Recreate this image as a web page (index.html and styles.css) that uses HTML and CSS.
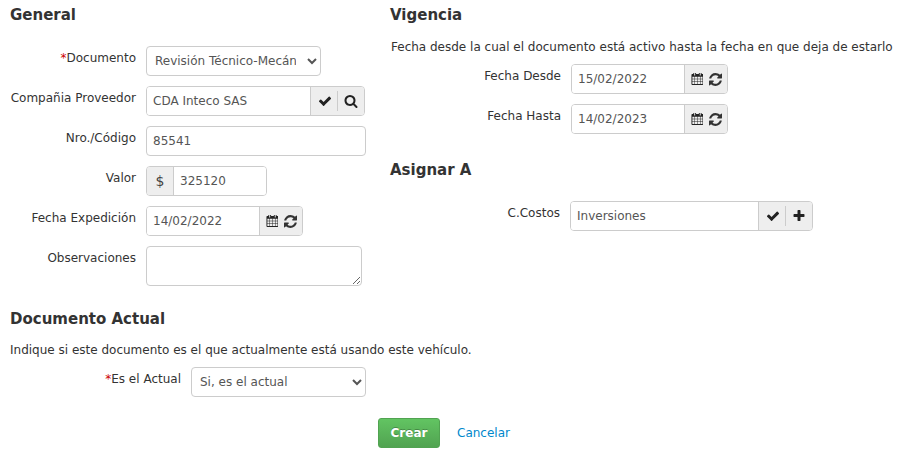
FILE: index.html
```html
<!DOCTYPE html>
<html lang="es">
<head>
<meta charset="utf-8">
<title>Documento</title>
<link rel="stylesheet" href="styles.css">
</head>
<body>
<svg class="defs" width="0" height="0" aria-hidden="true">
  <symbol id="i-check" viewBox="0 0 1792 1792"><path d="M1671 566q0 40-28 68l-724 724-136 136q-28 28-68 28t-68-28l-136-136-362-362q-28-28-28-68t28-68l136-136q28-28 68-28t68 28l294 295 656-657q28-28 68-28t68 28l136 136q28 28 28 68z"/></symbol>
  <symbol id="i-search" viewBox="0 0 1792 1792"><path d="M1216 832q0-185-131.500-316.500t-316.500-131.500-316.500 131.500-131.500 316.500 131.500 316.500 316.500 131.500 316.500-131.500 131.500-316.500zm512 832q0 52-38 90t-90 38q-54 0-90-38l-343-342q-179 124-399 124-143 0-273.500-55.500t-225-150-150-225-55.500-273.500 55.500-273.500 150-225 225-150 273.500-55.500 273.500 55.500 225 150 150 225 55.500 273.500q0 220-124 399l343 343q37 37 37 90z"/></symbol>
  <symbol id="i-plus" viewBox="0 0 1792 1792"><path d="M1600 736v192q0 40-28 68t-68 28h-416v416q0 40-28 68t-68 28h-192q-40 0-68-28t-28-68v-416h-416q-40 0-68-28t-28-68v-192q0-40 28-68t68-28h416v-416q0-40 28-68t68-28h192q40 0 68 28t28 68v416h416q40 0 68 28t28 68z"/></symbol>
  <symbol id="i-refresh" viewBox="128 128 1536 1536"><path d="M1639 1056q0 5-1 7-64 268-268 434.500t-478 166.500q-146 0-282.500-55t-243.500-157l-129 129q-19 19-45 19t-45-19-19-45v-448q0-26 19-45t45-19h448q26 0 45 19t19 45-19 45l-137 137q71 66 161 102t187 36q134 0 250-65t186-179q11-17 53-117 8-23 30-23h192q13 0 22.500 9.500t9.500 22.500zm25-800v448q0 26-19 45t-45 19h-448q-26 0-45-19t-19-45 19-45l138-138q-148-137-349-137-134 0-250 65t-186 179q-11 17-53 117-8 23-30 23h-199q-13 0-22.500-9.500t-9.500-22.500v-7q65-268 270-434.500t480-166.500q146 0 284 55.500t245 156.500l130-129q19-19 45-19t45 19 19 45z"/></symbol>
  <symbol id="i-calendar" viewBox="0 128 1664 1664"><path d="M192 1664h288v-288h-288v288zm352 0h320v-288h-320v288zm-352-352h288v-320h-288v320zm352 0h320v-320h-320v320zm-352-384h288v-288h-288v288zm736 736h320v-288h-320v288zm-384-736h320v-288h-320v288zm768 736h288v-288h-288v288zm-384-352h320v-320h-320v320zm-352-864v-288q0-13-9.500-22.500t-22.500-9.500h-64q-13 0-22.500 9.500t-9.500 22.500v288q0 13 9.500 22.500t22.500 9.500h64q13 0 22.500-9.500t9.500-22.500zm736 864h288v-320h-288v320zm-384-384h320v-288h-320v288zm384 0h288v-288h-288v288zm32-480v-288q0-13-9.500-22.500t-22.500-9.500h-64q-13 0-22.500 9.500t-9.500 22.500v288q0 13 9.500 22.500t22.500 9.500h64q13 0 22.500-9.500t9.500-22.500zm384-64v1280q0 52-38 90t-90 38h-1408q-52 0-90-38t-38-90v-1280q0-52 38-90t90-38h128v-96q0-66 47-113t113-47h64q66 0 113 47t47 113v96h384v-96q0-66 47-113t113-47h64q66 0 113 47t47 113v96h128q52 0 90 38t38 90z"/></symbol>
</svg>
<form class="page">
  <div class="columns">
    <section class="col-left">
      <h3 class="title title-general">General</h3>
      <div class="row"><label class="lbl"><span class="req">*</span>Documento</label>
        <select class="ctl w-doc"><option>Revisión Técnico-Mecánica</option></select></div>
      <div class="row"><label class="lbl">Compañia Proveedor</label>
        <div class="group w-prov"><input class="field" value="CDA Inteco SAS">
          <span class="addon"><svg class="ico"><use href="#i-check"/></svg><i class="sep"></i><svg class="ico"><use href="#i-search"/></svg></span></div></div>
      <div class="row"><label class="lbl">Nro./Código</label>
        <input class="ctl w-nro" value="85541"></div>
      <div class="row"><label class="lbl">Valor</label>
        <div class="group w-val"><span class="prefix">$</span><input class="field" value="325120"></div></div>
      <div class="row"><label class="lbl">Fecha Expedición</label>
        <div class="group w-date"><input class="field" value="14/02/2022">
          <span class="addon addon-date"><svg class="ico-cal"><use href="#i-calendar"/></svg><svg class="ico-ref"><use href="#i-refresh"/></svg></span></div></div>
      <div class="row"><label class="lbl">Observaciones</label>
        <textarea class="ctl w-obs"></textarea></div>
    </section>
    <section class="col-right">
      <h3 class="title title-vig">Vigencia</h3>
      <p class="text text-vig">Fecha desde la cual el documento está activo hasta la fecha en que deja de estarlo</p>
      <div class="row"><label class="lbl lbl-r">Fecha Desde</label>
        <div class="group w-date"><input class="field" value="15/02/2022">
          <span class="addon addon-date"><svg class="ico-cal"><use href="#i-calendar"/></svg><svg class="ico-ref"><use href="#i-refresh"/></svg></span></div></div>
      <div class="row"><label class="lbl lbl-r">Fecha Hasta</label>
        <div class="group w-date"><input class="field" value="14/02/2023">
          <span class="addon addon-date"><svg class="ico-cal"><use href="#i-calendar"/></svg><svg class="ico-ref"><use href="#i-refresh"/></svg></span></div></div>
      <h3 class="title title-asig">Asignar A</h3>
      <div class="row"><label class="lbl lbl-c">C.Costos</label>
        <div class="group w-cost"><input class="field" value="Inversiones">
          <span class="addon"><svg class="ico"><use href="#i-check"/></svg><i class="sep"></i><svg class="ico"><use href="#i-plus"/></svg></span></div></div>
    </section>
  </div>
  <section class="actual">
    <h3 class="title">Documento Actual</h3>
    <p class="text text-act">Indique si este documento es el que actualmente está usando este vehículo.</p>
    <div class="row"><label class="lbl lbl-a"><span class="req">*</span>Es el Actual</label>
      <select class="ctl w-act"><option>Si, es el actual</option></select></div>
  </section>
  <div class="actions"><button type="button" class="btn">Crear</button><a class="link" href="#">Cancelar</a></div>
</form>
</body>
</html>
```
FILE: styles.css
```css
* { box-sizing: border-box; }
html, body { margin: 0; padding: 0; background: #fff; }
body { font: 12px/18px "DejaVu Sans", Verdana, sans-serif; color: #333; overflow: hidden; }
.defs { position: absolute; }
.page { width: 897px; height: 455px; padding: 0 0 0 10px; }
.columns { display: flex; height: 309px; }
.col-left { width: 380px; }
.col-right { flex: 1; min-width: 0; }
.title { margin: 0; font-size: 15px; line-height: 20px; font-weight: bold; color: #333; }
.title-general { padding-top: 5px; margin-bottom: 21px; }
.title-vig { padding-top: 5px; margin-bottom: 13px; }
.title-asig { margin-top: 26px; margin-bottom: 21px; }
.text { margin: 0; white-space: nowrap; }
.text-vig { padding-left: 1px; height: 26px; }
.text-act { margin-top: 12px; margin-bottom: 8px; }
.row { display: flex; align-items: flex-start; margin-bottom: 10px; }
.lbl { width: 126px; margin-right: 10px; text-align: right; white-space: nowrap; padding-top: 3px; }
.lbl-r { width: 171px; }
.lbl-c { width: 170px; }
.lbl-a { width: 171px; }
.req { color: #c00; }
.ctl, .field { font: 12px "DejaVu Sans", Verdana, sans-serif; color: #555; background: #fff; }
.ctl { height: 30px; border: 1px solid #ccc; border-radius: 4px; padding: 0 6px; display: block; margin: 0; }
select.ctl { padding: 0 8px 0 4px; }
textarea.ctl { height: 40px; resize: both; }
.group { display: flex; height: 30px; border: 1px solid #ccc; border-radius: 4px; overflow: hidden; }
.field { flex: 1; min-width: 0; border: 0; outline: 0; padding: 0 6px; height: 28px; }
.addon { display: flex; align-items: center; background: #eee; border-left: 1px solid #ccc; padding: 0 6px 0 7px; }
.addon-date { padding: 0 5px 0 6px; gap: 6px; }
.ico { width: 14px; height: 14px; fill: #222; display: block; }
.ico-cal { width: 12px; height: 12px; fill: #222; display: block; }
.ico-ref { width: 13px; height: 13px; fill: #333; display: block; }
.sep { display: block; width: 1px; height: 20px; background: #ccc; margin: 0 6px 0 5px; }
.prefix { width: 27px; background: #eee; border-right: 1px solid #ccc; text-align: center; line-height: 28px; font-size: 14px; color: #444; }
.w-doc { width: 175px; }
.w-prov { width: 219px; }
.w-nro { width: 220px; }
.w-val { width: 121px; }
.w-date { width: 157px; }
.w-obs { width: 216px; }
.w-cost { width: 243px; }
.w-act { width: 175px; }
.actions { display: flex; align-items: center; margin-left: 368px; margin-top: 21px; }
.btn { width: 62px; height: 30px; border: 1px solid #51a351; border-radius: 3px; background: linear-gradient(#62c462, #51a351); color: #fff; font: bold 12px "DejaVu Sans", Verdana, sans-serif; text-shadow: 0 -1px 0 rgba(0,0,0,.25); padding: 0; }
.link { margin-left: 17px; color: #0088cc; text-decoration: none; }
```
